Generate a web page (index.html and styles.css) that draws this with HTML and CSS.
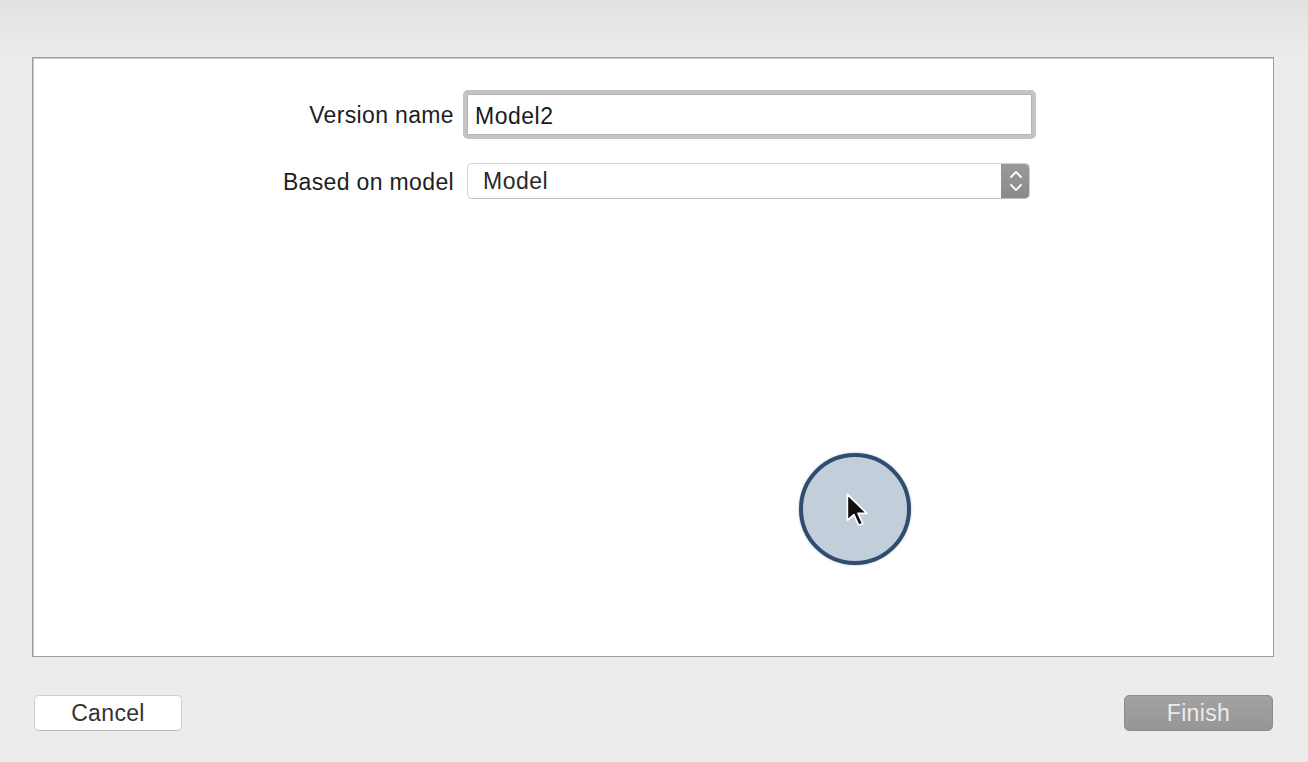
FILE: index.html
```html
<!DOCTYPE html>
<html>
<head>
<meta charset="utf-8">
<link rel="stylesheet" href="styles.css">
</head>
<body>
<div class="page">
  <div class="panel">
    <div class="form">
      <div class="label">Version name</div>
      <div class="textfield"><span class="value">Model2</span></div>
      <div class="label">Based on model</div>
      <div class="select">
        <span class="value">Model</span>
        <span class="stepper">
          <svg width="16" height="26" viewBox="0 0 16 26"><path d="M3 9 L8 4 L13 9" fill="none" stroke="#fff" stroke-width="1.8" stroke-linecap="round" stroke-linejoin="round"/><path d="M3 17 L8 22 L13 17" fill="none" stroke="#fff" stroke-width="1.8" stroke-linecap="round" stroke-linejoin="round"/></svg>
        </span>
      </div>
    </div>
    <div class="click">
      <svg class="cursor" width="26" height="38" viewBox="0 0 22 32"><path d="M2 2 L2 24 L7.5 19 L11.5 28 L15 26.5 L11 18 L18.5 18 Z" fill="#111" stroke="#fff" stroke-width="1.4" stroke-linejoin="round"/></svg>
    </div>
  </div>
  <div class="footer">
    <button class="btn cancel">Cancel</button>
    <button class="btn finish">Finish</button>
  </div>
</div>
</body>
</html>
```
FILE: styles.css
```css
html, body {
  margin: 0;
  padding: 0;
}
body {
  width: 1308px;
  height: 762px;
  background: linear-gradient(to bottom, #e2e2e2 0px, #ececec 60px, #ececec 100%);
  font-family: "Liberation Sans", Arial, sans-serif;
  overflow: hidden;
}
.page {
  padding: 57px 34px 0 32px;
  display: flex;
  flex-direction: column;
}
.panel {
  position: relative;
  height: 598px;
  background: #fff;
  border: 1px solid #9e9e9e;
  box-shadow: inset 1px 1px 0 #c8c8c8;
}
.form {
  display: grid;
  grid-template-columns: 421px 573px;
  column-gap: 9px;
  row-gap: 24px;
  align-items: center;
  padding-top: 32px;
}
.label {
  text-align: right;
  font-size: 23px;
  letter-spacing: 0.35px;
  color: #1e1e1e;
  line-height: 26px;
  padding-top: 1px;
}
.textfield {
  box-sizing: border-box;
  height: 49px;
  border: 4px solid #c4c4c4;
  border-radius: 5px;
  background: #fff;
  box-shadow: inset 0 0 0 1px #b4b4b4;
  display: flex;
  align-items: center;
  padding-left: 8px;
  padding-top: 4px;
}
.value {
  font-size: 23px;
  letter-spacing: 0.5px;
  color: #1a1a1a;
}
.select {
  box-sizing: border-box;
  margin-left: 4px;
  width: 563px;
  height: 36px;
  border: 1px solid #d2d2d2;
  border-bottom-color: #c0c0c0;
  border-radius: 5px;
  background: #fff;
  display: flex;
  align-items: center;
  padding-left: 15px;
  overflow: hidden;
}
.select .value {
  flex: 1;
  color: #2a2a2a;
}
.stepper {
  align-self: stretch;
  width: 29px;
  margin: -1px -1px -1px 0;
  background: linear-gradient(to bottom, #9a9a9a, #8a8a8a);
  border-radius: 0 5px 5px 0;
  display: flex;
  align-items: center;
  justify-content: center;
}
.click {
  position: absolute;
  left: 766px;
  top: 395px;
  box-sizing: border-box;
  width: 112px;
  height: 112px;
  border-radius: 50%;
  border: 4px solid #2f4e6f;
  background: #c3cedb;
  box-shadow: 0 0 2px rgba(47, 78, 111, 0.5);
}
.cursor {
  position: absolute;
  left: 42px;
  top: 35px;
}
.footer {
  display: flex;
  justify-content: space-between;
  margin-top: 38px;
  padding: 0 1px 0 2px;
}
.btn {
  box-sizing: border-box;
  width: 148px;
  height: 36px;
  border-radius: 5px;
  font-family: "Liberation Sans", Arial, sans-serif;
  font-size: 23px;
  letter-spacing: 0.35px;
  padding: 0;
  display: flex;
  align-items: center;
  justify-content: center;
}
.cancel {
  background: #fff;
  border: 1px solid #cfcfcf;
  border-bottom-color: #b8b8b8;
  color: #333;
}
.finish {
  width: 149px;
  background: linear-gradient(to bottom, #a2a2a2, #969696);
  border: 1px solid #8e8e8e;
  color: #ececec;
}
```
